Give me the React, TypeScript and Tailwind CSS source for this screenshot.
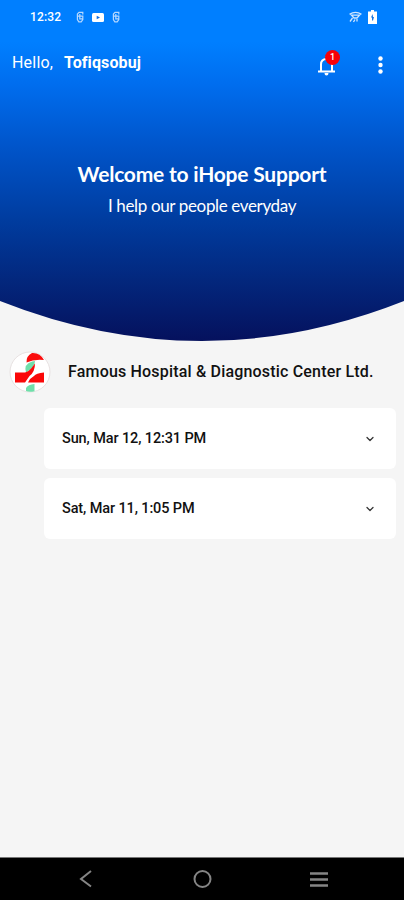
import { ChevronDown } from 'lucide-react';

interface Visit {
    id: number;
    date: string;
}

const visits: Visit[] = [
    { id: 1, date: 'Sun, Mar 12, 12:31 PM' },
    { id: 2, date: 'Sat, Mar 11, 1:05 PM' },
];

function AppGlyph() {
    return (
        <svg width="8" height="12" viewBox="0 0 8 12" fill="none" stroke="#b5d8ff" strokeWidth="1.2">
            <path d="M6.8 3.4V1.4H3L1.4 3V8.6L2.8 10.8H5.2L6.8 8.6V5.2H1.4M3.8 3V7.8H6.5" />
        </svg>
    );
}

function StatusBar() {
    return (
        <div className="flex h-[34px] items-center pl-[30px] pr-[27px] text-white">
            <span className="w-[46px] text-[12px] font-medium tracking-[0.15px]">12:32</span>
            <div className="flex items-center gap-[8px]">
                <AppGlyph />
                <svg width="12" height="9" viewBox="0 0 12 9">
                    <rect width="12" height="9" rx="1.5" fill="#fff" />
                    <path d="M4.7 2.8L8 4.5L4.7 6.3Z" fill="#0b6de5" />
                </svg>
                <AppGlyph />
            </div>
            <div className="ml-auto flex items-center gap-[6px]">
                <svg width="13" height="12" viewBox="0 0 13 12" fill="none" stroke="#cfe6ff" strokeWidth="1.3">
                    <path d="M.5 3.2Q6.5-.3 12.5 3.2M2.5 4.2H10.5L8 7H5ZM1 10.5L3.5 7M4.500 11L6 8.500M8 8V10.500" />
                </svg>
                <svg width="9" height="14" viewBox="0 0 9 14">
                    <path d="M3 0H6V1.5H9V14H0V1.5H3Z" fill="#fff" />
                    <path d="M4.5 4L3 7.5H4V10.5H5L6 7H5Z" fill="#1674e0" />
                </svg>
            </div>
        </div>
    );
}

function Header() {
    return (
        <header className="h-[342px] bg-[linear-gradient(180deg,#007fff_0px,#007fff_42px,#006dee_85px,#0055cb_145px,#003c9f_220px,#03277d_280px,#05115d_341px)] text-white [clip-path:path('M0_0H404V301Q202_381_0_301Z')]">
            <StatusBar />
            <div className="flex h-[56px] items-center pl-[12px] pr-[21px]">
                <span className="w-[52px] pt-px text-[16px] tracking-[0.2px]">Hello,</span>
                <span className="pt-px text-[16px] font-bold tracking-[0.1px]">Tofiqsobuj</span>
                <div className="relative ml-auto mt-[8px]">
                    <svg width="17" height="20" viewBox="0 0 17 20" fill="none" stroke="#fff" strokeWidth="2">
                        <path d="M0 15.5H17M3 15.5V8.5Q3 3 8.5 3T14 8.5V15.5M8.5 0V3" />
                        <path d="M6.5 17H10.5Q10.5 19.5 8.5 19.5T6.5 17Z" fill="#fff" stroke="none" />
                    </svg>
                    <span className="absolute -top-[6px] left-[7px] flex size-[15px] items-center justify-center rounded-full bg-[#f80008] text-[9px] font-medium">1</span>
                </div>
                <svg className="ml-[43px] mt-[6px]" width="5" height="18" viewBox="0 0 5 18" fill="#fff">
                    <circle cx="2.5" cy="2.5" r="2.2" />
                    <circle cx="2.5" cy="9" r="2.2" />
                    <circle cx="2.5" cy="15.5" r="2.2" />
                </svg>
            </div>
            <div className="mt-[70px] flex flex-col items-center font-[Lato,sans-serif]">
                <h1 className="text-[21px] leading-[28px] font-bold tracking-[-0.22px]">Welcome to iHope Support</h1>
                <p className="mt-[5px] text-[17px] leading-[26px] tracking-[-0.35px]">I help our people everyday</p>
            </div>
        </header>
    );
}

function HospitalLogo() {
    return (
        <svg width="42" height="42" viewBox="0 0 42 42">
            <circle cx="21" cy="21" r="20" fill="#fff" stroke="#e8e2e2" />
            <path d="M17 21.5Q14.5 13 23 10.5L26 10Q26 16 17 21.5Z" fill="#6fdfaa" />
            <path d="M17.500 11.500Q17 5 23 2Q31 1.500 35 9Q25 8 17.500 11.500Z" fill="#fa0d0d" />
            <path d="M6 21.5H16Q20 20.5 22.5 17L26 12.500Q26 21 20.500 25L16 31.5H6Z" fill="#fa0808" />
            <path d="M35 21.5V31.5H19Q21 27 25 25Q27 22 35 21.500Z" fill="#fa0808" />
            <path d="M17 37Q19 33.500 25.500 33V40.300Q20 41.500 17 40Z" fill="#6fdfaa" />
        </svg>
    );
}

function VisitCard({ visit }: { visit: Visit }) {
    return (
        <button className="flex h-[61px] w-full items-center justify-between rounded-[6px] bg-white pl-[18px] pr-[20px] text-left">
            <span className="text-[14.5px] font-medium tracking-[-0.12px]">{visit.date}</span>
            <ChevronDown size={12} strokeWidth={2.5} color="#333" />
        </button>
    );
}

function NavBar() {
    return (
        <nav className="h-[43px] border-t border-[#777] bg-black">
            <svg width="404" height="42" viewBox="0 858 404 42" fill="none" stroke="#858585" strokeWidth="2">
                <path d="M91 871L81 879L91 886.5" />
                <circle cx="202.5" cy="879" r="8" />
                <path d="M310 873.5H328M310 879.5H328M310 885.5H328" strokeWidth="2.5" />
            </svg>
        </nav>
    );
}

export default function App() {
    return (
        <div className="flex h-[900px] w-[404px] flex-col overflow-hidden bg-[#f5f5f5] font-[Roboto,sans-serif] text-[#111]">
            <Header />
            <main className="flex-1">
                <div className="mt-[8px] flex h-[44px] items-center pl-[9px]">
                    <HospitalLogo />
                    <h2 className="ml-[17px] whitespace-nowrap text-[16px] font-medium tracking-[0.18px]">Famous Hospital &amp; Diagnostic Center Ltd.</h2>
                </div>
                <div className="mt-[14px] flex flex-col gap-[9px] pl-[44px] pr-[8px]">
                    {visits.map(visit => (
                        <VisitCard key={visit.id} visit={visit} />
                    ))}
                </div>
            </main>
            <NavBar />
        </div>
    );
}
